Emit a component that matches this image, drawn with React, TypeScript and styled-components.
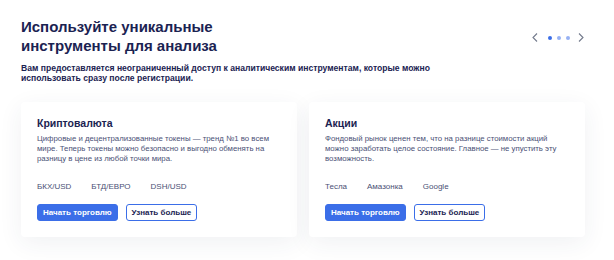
import React from 'react'
import styled, { createGlobalStyle } from 'styled-components'

const GlobalStyle = createGlobalStyle`
  html, body {
    margin: 0;
    padding: 0;
    background: #ffffff;
    font-family: "Liberation Sans", Arial, sans-serif;
  }
`

const Page = styled.section`
  width: 614px;
  height: 260px;
  box-sizing: border-box;
  padding: 17px 29px 0 21px;
  overflow: hidden;
`

const TitleRow = styled.div`
  display: flex;
  align-items: center;
  justify-content: space-between;
`

const Title = styled.h1`
  margin: 0;
  font-size: 15px;
  line-height: 19px;
  font-weight: 700;
  color: #1b2352;
  max-width: 220px;
`

const Slider = styled.div`
  display: flex;
  align-items: center;
  margin-top: 3px;
`

const Arrow = styled.span`
  display: flex;
  justify-content: center;
  width: 8px;
  color: #737a8c;
  & svg {
    width: 6px;
    height: 9px;
  }
`

const Dots = styled.div`
  display: flex;
  gap: 5px;
  padding: 0 7px 0 9px;
`

const Dot = styled.span<{ $active?: boolean }>`
  width: 4px;
  height: 4px;
  border-radius: 50%;
  background: ${(p) => (p.$active ? '#3b6ee8' : '#97b1f4')};
`

const Lead = styled.p`
  margin: 8px 0 0;
  max-width: 410px;
  font-size: 8.6px;
  line-height: 10px;
  font-weight: 700;
  color: #1b2352;
`

const Cards = styled.div`
  display: grid;
  grid-template-columns: 1fr 1fr;
  gap: 12px;
  margin-top: 19px;
`

const Card = styled.article`
  background: #ffffff;
  border-radius: 4px;
  padding: 15px 16px 16px;
  box-shadow: 0 6px 24px rgba(40, 50, 90, 0.07);
  display: flex;
  flex-direction: column;
`

const CardTitle = styled.h2`
  margin: 0;
  font-size: 10.5px;
  line-height: 13px;
  font-weight: 700;
  color: #1b2352;
`

const CardText = styled.p`
  margin: 4px 0 0;
  max-width: 245px;
  font-size: 7.8px;
  line-height: 10px;
  color: #4a5075;
  min-height: 30px;
`

const Tickers = styled.div`
  display: flex;
  gap: 20px;
  margin-top: 18px;
  font-size: 8px;
  line-height: 10px;
  color: #4a5075;
`

const Actions = styled.div`
  display: flex;
  gap: 8px;
  margin-top: 12px;
`

const Button = styled.button<{ $outline?: boolean }>`
  height: 17px;
  padding: 0 5px;
  border-radius: 3px;
  font-family: inherit;
  font-size: 8px;
  font-weight: 700;
  cursor: pointer;
  box-sizing: border-box;
  border: 1.5px solid #3b6ee8;
  background: ${(p) => (p.$outline ? '#ffffff' : '#3b6ee8')};
  color: ${(p) => (p.$outline ? '#1b2352' : '#ffffff')};
`

type Offer = {
  title: string
  text: string
  tickers: string[]
}

const offers: Offer[] = [
  {
    title: 'Криптовалюта',
    text: 'Цифровые и децентрализованные токены — тренд №1 во всем мире. Теперь токены можно безопасно и выгодно обменять на разницу в цене из любой точки мира.',
    tickers: ['БКХ/USD', 'БТД/ЕВРО', 'DSH/USD'],
  },
  {
    title: 'Акции',
    text: 'Фондовый рынок ценен тем, что на разнице стоимости акций можно заработать целое состояние. Главное — не упустить эту возможность.',
    tickers: ['Тесла', 'Амазонка', 'Google'],
  },
]

const App = () => {
  return (
    <>
      <GlobalStyle />
      <Page>
        <TitleRow>
          <Title>Используйте уникальные инструменты для анализа</Title>
          <Slider>
            <Arrow>
              <svg viewBox="0 0 6 9" fill="none" stroke="currentColor" strokeWidth="1.1">
                <path d="M5 0.5 L1 4.5 L5 8.5" />
              </svg>
            </Arrow>
            <Dots>
              <Dot $active />
              <Dot />
              <Dot />
            </Dots>
            <Arrow>
              <svg viewBox="0 0 6 9" fill="none" stroke="currentColor" strokeWidth="1.1">
                <path d="M1 0.5 L5 4.5 L1 8.5" />
              </svg>
            </Arrow>
          </Slider>
        </TitleRow>
        <Lead>
          Вам предоставляется неограниченный доступ к аналитическим инструментам, которые можно
          использовать сразу после регистрации.
        </Lead>
        <Cards>
          {offers.map((o) => (
            <Card key={o.title}>
              <CardTitle>{o.title}</CardTitle>
              <CardText>{o.text}</CardText>
              <Tickers>
                {o.tickers.map((t) => (
                  <span key={t}>{t}</span>
                ))}
              </Tickers>
              <Actions>
                <Button>Начать торговлю</Button>
                <Button $outline>Узнать больше</Button>
              </Actions>
            </Card>
          ))}
        </Cards>
      </Page>
    </>
  )
}

export default App
